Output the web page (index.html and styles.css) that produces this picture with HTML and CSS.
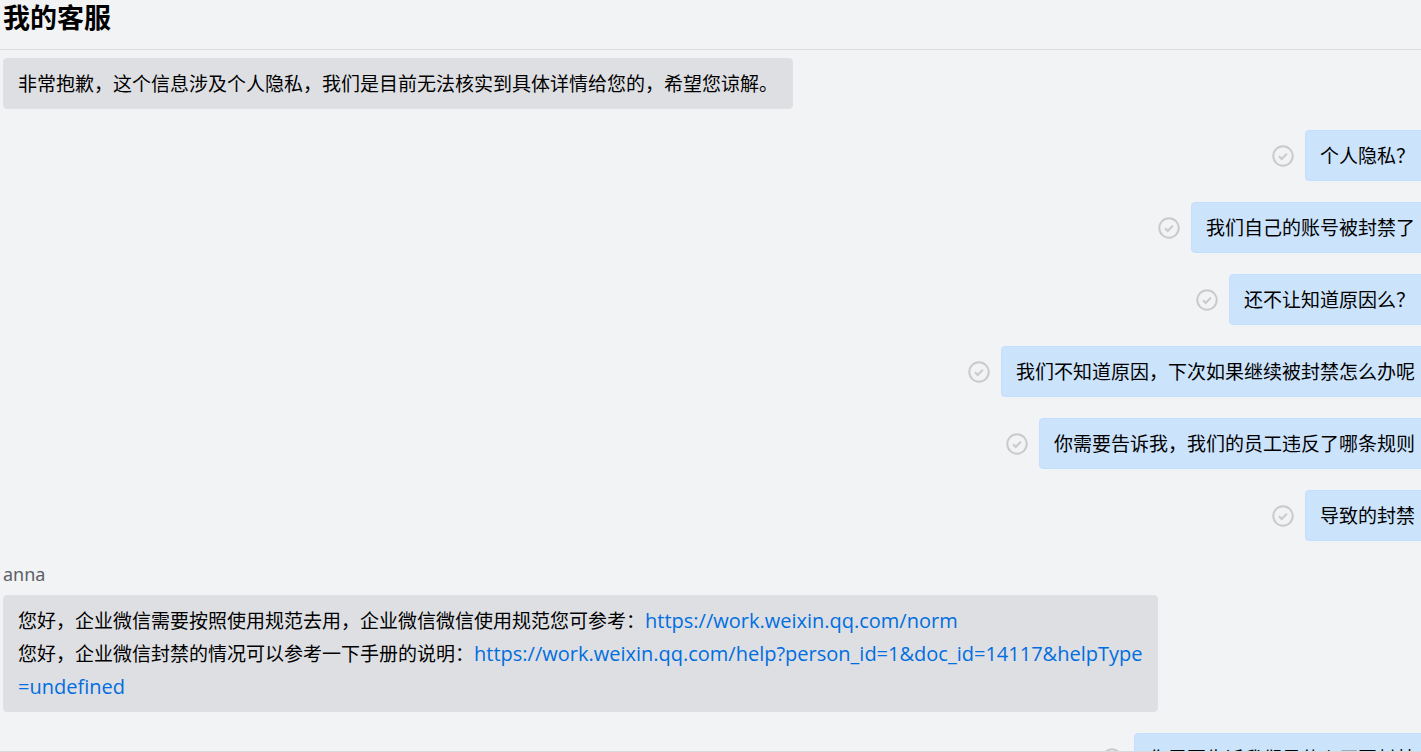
FILE: index.html
```html
<!DOCTYPE html>
<html lang="zh-CN">

<head>
    <meta charset="UTF-8">
    <meta name="viewport" content="width=device-width, initial-scale=1.0">
    <title>我的客服</title>
    <link rel="stylesheet" href="styles.css">
</head>

<body>
    <svg width="0" height="0" class="sprite">
        <symbol id="tick" viewBox="0 0 22 22">
            <circle cx="11" cy="11" r="9.7" />
            <path d="M7 11.3l2.7 2.7 5.2-5.4" />
        </symbol>
    </svg>

    <header class="header">
        <h1>我的客服</h1>
    </header>

    <main class="chat">
        <div class="message">
            <p class="bubble">非常抱歉，这个信息涉及个人隐私，我们是目前无法核实到具体详情给您的，希望您谅解。</p>
        </div>

        <div class="message mine">
            <svg class="status"><use href="#tick" /></svg>
            <p class="bubble">个人隐私？</p>
        </div>
        <div class="message mine">
            <svg class="status"><use href="#tick" /></svg>
            <p class="bubble">我们自己的账号被封禁了</p>
        </div>
        <div class="message mine">
            <svg class="status"><use href="#tick" /></svg>
            <p class="bubble">还不让知道原因么？</p>
        </div>
        <div class="message mine">
            <svg class="status"><use href="#tick" /></svg>
            <p class="bubble">我们不知道原因，下次如果继续被封禁怎么办呢</p>
        </div>
        <div class="message mine">
            <svg class="status"><use href="#tick" /></svg>
            <p class="bubble">你需要告诉我，我们的员工违反了哪条规则</p>
        </div>
        <div class="message mine">
            <svg class="status"><use href="#tick" /></svg>
            <p class="bubble">导致的封禁</p>
        </div>

        <div class="sender">anna</div>
        <div class="message">
            <p class="bubble">您好，企业微信需要按照使用规范去用，企业微信微信使用规范您可参考：<a href="https://work.weixin.qq.com/norm">https://work.weixin.qq.com/norm</a><br>
                您好，企业微信封禁的情况可以参考一下手册的说明：<a href="https://work.weixin.qq.com/help?person_id=1&amp;doc_id=14117&amp;helpType=undefined">https://work.weixin.qq.com/help?person_id=1&amp;doc_id=14117&amp;helpType<wbr>=undefined</a></p>
        </div>

        <div class="message mine">
            <svg class="status"><use href="#tick" /></svg>
            <p class="bubble">你需要告诉我们是什么原因封禁</p>
        </div>
    </main>
</body>

</html>
```
FILE: styles.css
```css
* {
    box-sizing: border-box;
}

body {
    margin: 0;
    height: 100vh;
    display: flex;
    flex-direction: column;
    overflow: hidden;
    background-color: #f2f3f5;
    border-bottom: 1px solid #d8d9dc;
    color: #000;
    font-family: "Noto Sans", "Noto Sans CJK SC", sans-serif;
    font-size: 19px;
    line-height: 33px;
}

.sprite {
    position: absolute;
}

.header {
    flex: none;
    height: 50px;
    padding: 0 3px;
    border-bottom: 1px solid #dcdde0;
}

h1 {
    margin: 0;
    font-size: 27px;
    line-height: 36px;
}

.chat {
    flex: 1;
    min-height: 0;
    overflow: hidden;
    padding: 8px 0 0 3px;
    /* own messages run past the right edge */
    margin-right: -9px;
}

.message {
    display: flex;
    align-items: center;
    margin-bottom: 21px;
}

.mine {
    justify-content: flex-end;
}

.bubble {
    margin: 0;
    max-width: 1155px;
    padding: 9px 14px 7px;
    border: 1px solid #dee0e3;
    border-radius: 4px;
    background-color: #dedfe3;
}

.mine .bubble {
    border-color: #c3deff;
    background-color: #cce3fc;
}

.bubble a {
    color: #006ee0;
    font-family: "Open Sans", sans-serif;
    font-size: 20px;
    line-height: 1;
    text-decoration: none;
}

.status {
    flex: none;
    width: 22px;
    height: 22px;
    margin-right: 11px;
    fill: none;
    stroke: #c9cacc;
    stroke-width: 2;
}

.sender {
    margin-bottom: 8px;
    color: #5c6066;
    font-size: 18px;
    line-height: 25px;
}
```
